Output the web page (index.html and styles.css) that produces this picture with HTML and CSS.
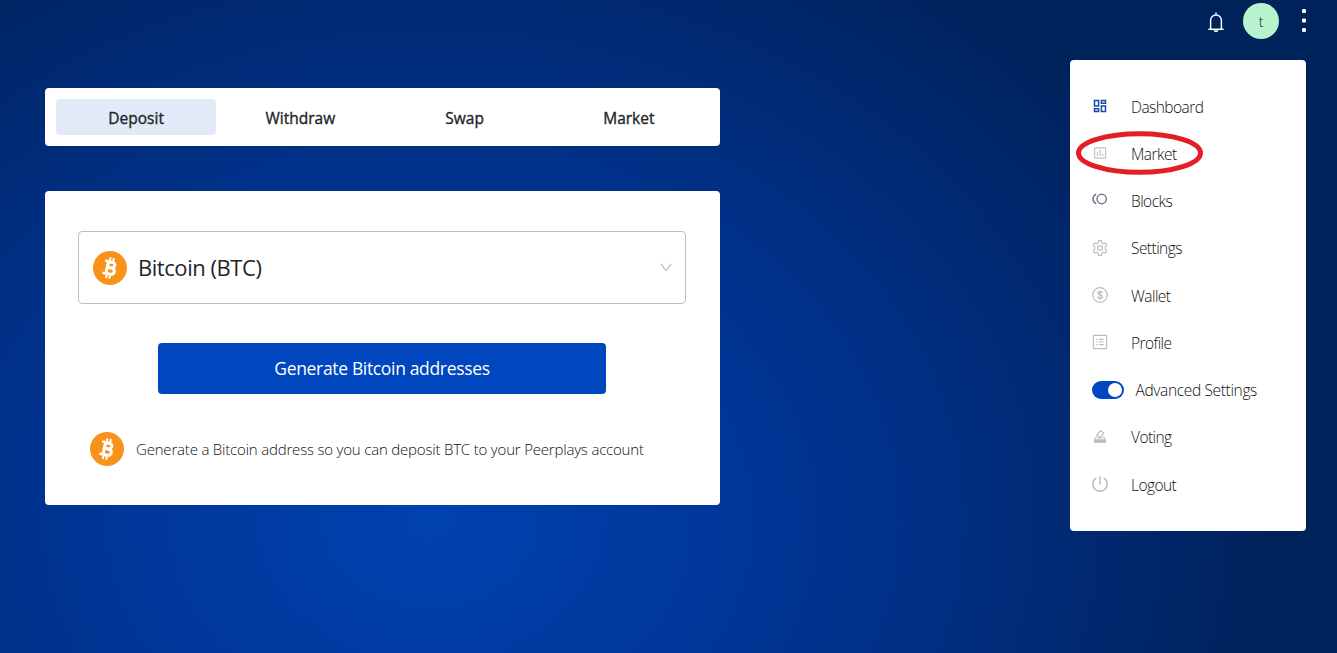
FILE: index.html
```html
<!DOCTYPE html>
<html lang="en">
<head>
<meta charset="utf-8">
<title>Peerplays Wallet</title>
<link rel="stylesheet" href="styles.css">
</head>
<body>
<svg class="defs" width="0" height="0" aria-hidden="true">
  <symbol id="btc" viewBox="0 0 34 34">
    <circle cx="17" cy="17" r="17" fill="#f7931a"/>
    <g transform="rotate(13 17 17)" fill="none" stroke="#fff">
      <path d="M14.2 10.6V23.4M14.2 10.9H18.2A2.7 2.7 0 0 1 18.2 16.6H14.2M18.2 16.6H18.8A3.1 3.1 0 0 1 18.8 23H14.2" stroke-width="3.1"/>
      <path d="M10.6 10.6H14M10.6 23.3H14" stroke-width="2.4"/>
      <path d="M15.2 6.4V10M18.6 6.4V10M15.2 24V27.6M18.6 24V27.6" stroke-width="2"/>
    </g>
  </symbol>
</svg>
<header class="topbar">
  <svg class="bell" viewBox="0 0 16 20" fill="none" stroke="#fff" stroke-width="1.4"><path d="M2.6 17V8.4a5.4 5.4 0 0 1 10.8 0V17M.4 17.2H15.6M8 .6V3M6.2 17.6a1.8 1.8 0 0 0 3.6 0"/></svg>
  <span class="avatar">t</span>
  <svg class="dots" viewBox="0 0 4 24" fill="#fff"><rect y="0" width="4" height="4" rx="1.2"/><rect y="9.5" width="4" height="4" rx="1.2"/><rect y="19" width="4" height="4" rx="1.2"/></svg>
</header>
<div class="page">
  <main class="main">
    <nav class="tabs">
      <a class="tab active">Deposit</a>
      <a class="tab">Withdraw</a>
      <a class="tab">Swap</a>
      <a class="tab">Market</a>
    </nav>
    <section class="card">
      <div class="select">
        <svg class="coin"><use href="#btc"/></svg>
        <span class="asset">Bitcoin (BTC)</span>
        <svg class="chevron" viewBox="0 0 12 9" fill="none" stroke="#b8b8b8" stroke-width="1.1"><path d="M.8.8 6 7.6 11.2.8"/></svg>
      </div>
      <button class="generate">Generate Bitcoin addresses</button>
      <div class="hint">
        <svg class="coin"><use href="#btc"/></svg>
        <p class="hint-text">Generate a Bitcoin address so you can deposit BTC to your Peerplays account</p>
      </div>
    </section>
  </main>
  <aside class="menu">
    <a class="item"><svg class="icon" viewBox="0 0 16 16" fill="none" stroke="#1a4aa8" stroke-width="1.5"><path d="M2.5 2.5H6.6V8H2.5zM9.4 2.5H13.5V5.2H9.4zM2.5 10.8H6.6V13.5H2.5zM9.4 8H13.5V13.5H9.4z"/></svg><span class="label">Dashboard</span></a>
    <a class="item"><svg class="icon" viewBox="0 0 16 16" fill="none" stroke="#c4c4c4" stroke-width="1.2"><rect x="2.6" y="2.8" width="11" height="10.4" rx=".8"/><path d="M5.4 6.6V11M8.1 5V11M10.8 9V11"/></svg><span class="label">Market</span><svg class="marker" viewBox="0 0 128 44" fill="none" stroke="#e31e26" stroke-width="5"><ellipse cx="63.5" cy="22" rx="61" ry="19.3"/></svg></a>
    <a class="item"><svg class="icon raised" viewBox="0 0 16 16" fill="none" stroke="#77798c" stroke-width="1.5"><circle cx="9.7" cy="8" r="4.7"/><path d="M4.2 3.2C-.1 5.3-.1 10.7 4.2 12.8"/></svg><span class="label">Blocks</span></a>
    <a class="item"><svg class="icon" viewBox="0 0 16 16" fill="none" stroke="#bdbdbd" stroke-width="1.2" stroke-linejoin="round"><path d="M6.6.7H9.4L9.9 2.8 11.4 3.7 13.4 3 14.8 5.4 13.2 7V9L14.8 10.6 13.4 13 11.4 12.3 9.9 13.2 9.4 15.3H6.6L6.1 13.2 4.6 12.3 2.6 13 1.2 10.6 2.8 9V7L1.2 5.4 2.6 3 4.6 3.7 6.1 2.8z"/><circle cx="8" cy="8" r="2.4"/></svg><span class="label">Settings</span></a>
    <a class="item"><svg class="icon" viewBox="0 0 16 16" fill="none" stroke="#bdbdbd" stroke-width="1.2"><circle cx="8" cy="8" r="7.3"/><path d="M10.4 6.1C10.1 4.2 5.7 4.1 5.7 6.1 5.7 8.4 10.5 7.4 10.5 9.9 10.5 12 5.7 12 5.4 9.9M8 3.4V12.6"/></svg><span class="label">Wallet</span></a>
    <a class="item"><svg class="icon" viewBox="0 0 16 16" fill="none" stroke="#bdbdbd" stroke-width="1.2"><rect x="1.4" y="1.4" width="13.2" height="13.2"/><path d="M4.2 5.4H5.6M7 5.4H11.7M4.2 8H5.6M7 8H11.7M4.2 10.6H5.6M7 10.6H11.7" stroke-width="1.1"/></svg><span class="label">Profile</span></a>
    <a class="item"><span class="switch"><span class="knob"></span></span><span class="label wide">Advanced Settings</span></a>
    <a class="item"><svg class="icon" viewBox="0 0 16 16" fill="none" stroke="#bdbdbd" stroke-width="1.2"><path d="M8.8 1.6 11.7 4.3 7.7 8.6 4.8 5.9zM4.6 7.6 2.8 10.4M11.4 7.6 13.2 10.4M5.6 9H10.4"/><rect x="2.1" y="10.3" width="11.8" height="3.6" fill="#bdbdbd" stroke="none"/></svg><span class="label">Voting</span></a>
    <a class="item"><svg class="icon" viewBox="0 0 16 16" fill="none" stroke="#bdbdbd" stroke-width="1.5"><path d="M4.3 1.9A7.2 7.2 0 1 0 11.7 1.9M8 .3V8.4"/></svg><span class="label">Logout</span></a>
  </aside>
</div>
</body>
</html>
```
FILE: styles.css
```css
* { box-sizing: border-box; }
body {
  margin: 0;
  height: 653px;
  overflow: hidden;
  font-family: "Open Sans", "Noto Sans", sans-serif;
  color: #212529;
  background: radial-gradient(ellipse 850px 690px at 430px 520px, #0042b0 0%, #003596 40%, #00225b 100%);
}
.defs { display: block; }
.topbar {
  height: 60px;
  padding: 3px 31px 0 0;
  display: flex;
  justify-content: flex-end;
  align-items: flex-start;
}
.bell { width: 16px; height: 20px; margin: 9px 19px 0 0; }
.avatar {
  width: 36px;
  height: 36px;
  border-radius: 50%;
  background: #b7f4cd;
  color: #111;
  font-size: 14px;
  font-weight: 300;
  line-height: 37px;
  text-align: center;
}
.dots { width: 4px; height: 24px; margin: 6px 0 0 23px; }
.page {
  display: flex;
  justify-content: space-between;
  align-items: flex-start;
  padding: 0 31px 0 45px;
}
.main { width: 675px; padding-top: 28px; }
.tabs {
  height: 58px;
  padding: 11px;
  display: flex;
  gap: 4px;
  background: #fff;
  border-radius: 4px;
}
.tab {
  width: 160.4px;
  height: 36px;
  line-height: 38px;
  text-align: center;
  font-size: 15.5px;
  -webkit-text-stroke: 0.35px #212529;
  border-radius: 4px;
}
.active { background: #e3eaf7; }
.card {
  height: 314px;
  margin-top: 45px;
  padding: 40px 34px 0 33px;
  background: #fff;
  border-radius: 4px;
}
.coin { width: 34px; height: 34px; flex: none; }
.select {
  height: 73px;
  padding: 0 13px 0 14px;
  display: flex;
  align-items: center;
  border: 1px solid #bdbdbd;
  border-radius: 4px;
}
.asset {
  flex: 1;
  margin: 0 0 2px 11px;
  font-size: 22px;
  letter-spacing: -0.45px;
  white-space: nowrap;
}
.chevron { width: 12px; height: 9px; }
.generate {
  display: block;
  width: 448px;
  height: 51px;
  margin: 39px 0 0 80px;
  padding: 0 0 2px;
  border: 0;
  border-radius: 4px;
  background: #0047bf;
  color: #fff;
  font-family: inherit;
  font-size: 17.5px;
  letter-spacing: -0.34px;
}
.hint { display: flex; align-items: center; margin: 38px 0 0 12px; }
.hint-text {
  margin: 0 0 0 12px;
  font-size: 15px;
  font-weight: 300;
  letter-spacing: -0.19px;
  color: #111;
  white-space: nowrap;
}
.menu {
  width: 236px;
  height: 471px;
  padding: 22.5px 22px 0;
  background: #fff;
  border-radius: 4px;
}
.item {
  position: relative;
  height: 47.25px;
  display: flex;
  align-items: center;
}
.icon { width: 16px; height: 16px; margin-right: 23px; flex: none; }
.raised { margin-bottom: 4px; }
.label {
  padding-top: 1px;
  font-size: 15.5px;
  font-weight: 300;
  letter-spacing: -0.55px;
  color: #111;
  white-space: nowrap;
}
.wide { letter-spacing: -0.35px; }
.marker { position: absolute; left: -16px; top: 1px; width: 128px; height: 44px; }
.switch {
  width: 32px;
  height: 18px;
  padding: 2px;
  margin-right: 11.5px;
  display: flex;
  justify-content: flex-end;
  border-radius: 9px;
  background: #0047bf;
}
.knob { width: 14px; height: 14px; border-radius: 50%; background: #fff; }
```
